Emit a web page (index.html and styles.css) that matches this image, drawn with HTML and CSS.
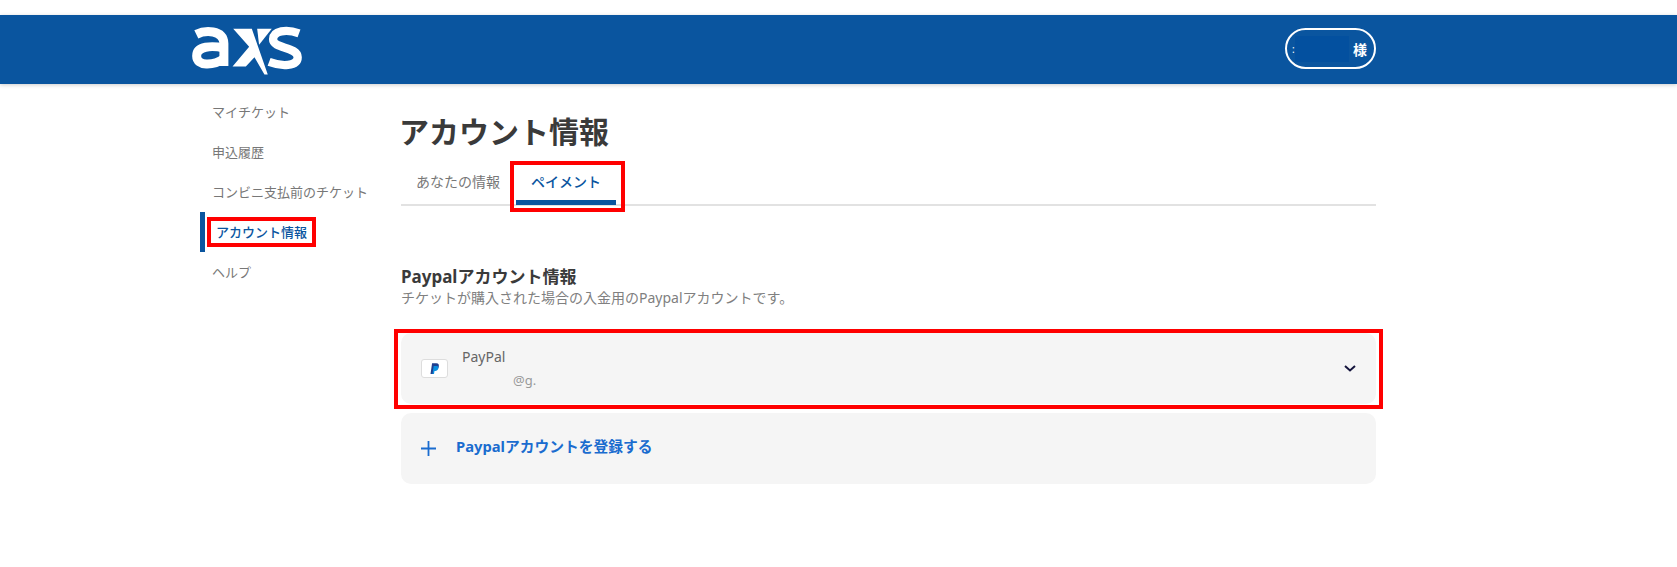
FILE: index.html
```html
<!DOCTYPE html>
<html lang="ja">
<head>
  <meta charset="UTF-8" />
  <meta name="viewport" content="width=device-width, initial-scale=1.0"/>
  <title>アカウント情報</title>
  <link rel="stylesheet" href="styles.css">
</head>
<body>
  <header class="topbar">
    <svg class="logo" viewBox="60 70 340 150" aria-label="axs">
      <g fill="none" stroke="#fff" stroke-width="27">
        <path d="M79 95 C105 82 160 80 162 122 L162 190"/>
        <path d="M162 136 C125 128 80 130 80 160 C80 192 130 190 162 168"/>
      </g>
      <path fill="none" stroke="#fff" stroke-width="25" d="M388 92 C350 78 310 84 310 110 C310 140 384 130 384 164 C384 192 335 192 298 178"/>
      <path fill="#fff" d="M190 78 H246 L294 216 L284 216 L254 164 L228 192 H188 L238 132 Z"/>
      <path fill="#fff" d="M262 78 H306 L268 126 Z"/>
    </svg>
    <div class="user-pill">
      <span class="user-dot">:</span>
      <span class="user-mask"></span>
      <span>様</span>
    </div>
  </header>

  <div class="layout">
    <nav class="sidebar">
      <a class="side-item">マイチケット</a>
      <a class="side-item">申込履歴</a>
      <a class="side-item">コンビニ支払前のチケット</a>
      <a class="side-item active"><span class="side-label">アカウント情報<i class="mark"></i></span></a>
      <a class="side-item">ヘルプ</a>
    </nav>

    <main class="content">
      <h1>アカウント情報</h1>
      <div class="tabs">
        <a class="tab">あなたの情報</a>
        <a class="tab selected">ペイメント<i class="mark"></i></a>
      </div>

      <h2>Paypalアカウント情報</h2>
      <p class="note">チケットが購入された場合の入金用のPaypalアカウントです。</p>

      <div class="panel account">
        <span class="pp-card">
          <svg viewBox="0 0 12 14" width="10" height="12">
            <path fill="#1f3f8f" d="M2.5 0 H7.5 C10.5 0 11 2 10.5 4.5 C10 7 8 8 6 8 H4.6 L3.8 13 H0.6 Z"/>
            <path fill="#0a8fe0" d="M4.4 3.5 H8 C10 3.5 10.4 5 10 6.5 C9.5 8.6 8 9.4 6.4 9.4 H5.4 L4.8 13 H3 Z"/>
          </svg>
        </span>
        <div class="account-text">
          <div class="account-name">PayPal</div>
          <div class="account-mail">@g.</div>
        </div>
        <svg class="chevron" viewBox="0 0 12 7" width="12" height="7">
          <path d="M1 1 L6 5.5 L11 1" fill="none" stroke="#14143c" stroke-width="2"/>
        </svg>
        <i class="mark"></i>
      </div>

      <div class="panel add">
        <svg class="plus" viewBox="0 0 15 15" width="15" height="15">
          <path d="M7.5 0 V15 M0 7.5 H15" stroke="#1a6ccf" stroke-width="1.8"/>
        </svg>
        <span class="add-label">Paypalアカウントを登録する</span>
      </div>
    </main>
  </div>
</body>
</html>
```

FILE: styles.css
```css
body {
  font-family: "Noto Sans", "Noto Sans CJK JP", sans-serif;
  margin: 0;
  background: white;
  color: #333;
}
.topbar {
  margin-top: 15px;
  height: 69px;
  background: #0a559f;
  box-shadow: 0 1px 4px rgba(0,0,0,0.2);
  display: flex;
  justify-content: space-between;
  align-items: center;
  padding: 0 301px 0 190px;
}
.logo {
  width: 113px;
  height: 50px;
  margin-top: 2px;
}
.user-pill {
  box-sizing: border-box;
  width: 91px;
  height: 41px;
  border: 2px solid white;
  border-radius: 21px;
  display: flex;
  align-items: center;
  padding-left: 5px;
  margin-top: -2px;
  color: white;
  font-size: 14px;
  font-weight: 700;
}
.user-dot {
  font-size: 10px;
  font-weight: 400;
  width: 3px;
}
.user-mask {
  width: 54px;
  height: 26px;
  background: #03509f;
  margin-right: 4px;
}
.layout {
  display: flex;
  margin-left: 200px;
}
.sidebar {
  width: 201px;
  padding-top: 8px;
  flex-shrink: 0;
}
.side-item {
  display: flex;
  align-items: center;
  height: 40px;
  padding: 0 0 2px 12px;
  font-size: 13px;
  color: #777;
  box-sizing: border-box;
}
.side-item.active {
  border-left: 5px solid #0a559f;
  padding-left: 11px;
  color: #0a559f;
  font-weight: 500;
}
.side-label {
  position: relative;
}
.mark {
  position: absolute;
  border: 4px solid #f00;
  box-sizing: border-box;
  pointer-events: none;
}
.side-label .mark {
  top: -5px;
  bottom: -6px;
  left: -9px;
  right: -9px;
}
.content {
  width: 975px;
}
h1 {
  font-size: 30px;
  font-weight: 700;
  line-height: 40px;
  margin: 28px 0 0 -2px;
  color: #3a3a3a;
}
.tabs {
  display: flex;
  padding-top: 13px;
  border-bottom: 2px solid #e2e2e2;
  padding-left: 15px;
  gap: 16px;
}
.tab {
  position: relative;
  font-size: 14px;
  line-height: 34px;
  color: #777;
  height: 35px;
}
.tab.selected {
  color: #0a559f;
  font-weight: 500;
  padding: 0 15px;
  border-bottom: 5px solid #0a559f;
  margin-bottom: -1px;
}
.tab .mark {
  top: -4px;
  bottom: -12px;
  left: -6px;
  right: -9px;
}
h2 {
  font-size: 17px;
  font-weight: 700;
  line-height: 22px;
  margin: 60px 0 0;
  color: #3a3a3a;
}
.note {
  font-size: 14px;
  line-height: 20px;
  margin: 0;
  color: #808080;
}
.panel {
  background: #f5f5f5;
  border-radius: 10px;
  height: 71px;
  display: flex;
  align-items: center;
  padding: 0 20px;
  box-sizing: border-box;
  position: relative;
}
.account {
  margin-top: 25px;
}
.account .mark {
  top: -4px;
  bottom: -5px;
  left: -7px;
  right: -7px;
}
.add {
  margin-top: 9px;
}
.pp-card {
  width: 27px;
  height: 19px;
  box-sizing: border-box;
  background: white;
  border: 1px solid #ddd;
  border-radius: 3px;
  display: flex;
  align-items: center;
  justify-content: center;
}
.account-text {
  margin-left: 14px;
  flex: 1;
}
.account-name {
  font-size: 14px;
  line-height: 20px;
  color: #666;
}
.account-mail {
  font-size: 13px;
  line-height: 20px;
  margin-top: 3px;
  padding-left: 51px;
  color: #999;
}
.add-label {
  margin-left: 20px;
  margin-bottom: 6px;
  font-size: 14.75px;
  font-weight: 700;
  color: #1a6ccf;
}
```
